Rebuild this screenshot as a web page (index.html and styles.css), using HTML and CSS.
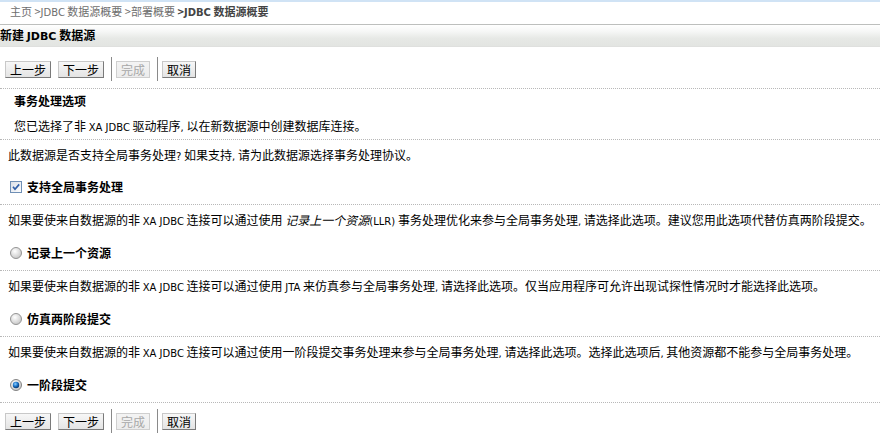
FILE: index.html
```html
<!DOCTYPE html>
<html>
<head>
<meta charset="utf-8">
<link rel="stylesheet" href="styles.css">
</head>
<body>
<div class="topstrip"></div>
<div class="crumbs"><span class="crumb">主页</span> <span class="crumb">&gt;<span class="en">JDBC</span> 数据源概要</span> <span class="crumb">&gt;部署概要</span> <span class="crumb cur">&gt;<span class="en">JDBC</span> 数据源概要</span></div>
<div class="titlebar">新建 <span class="en">JDBC</span> 数据源</div>
<div class="btnrow top">
  <button class="btn">上一步</button>
  <button class="btn">下一步</button>
  <span class="sep"></span>
  <button class="btn disabled">完成</button>
  <span class="sep"></span>
  <button class="btn">取消</button>
</div>
<div class="intro">
  <div class="sectitle">事务处理选项</div>
  <div class="secdesc">您已选择了非 <span class="en">XA JDBC</span> 驱动程序<span class="en">,</span> 以在新数据源中创建数据库连接。</div>
</div>
<div class="question">此数据源是否支持全局事务处理<span class="en">?</span> 如果支持<span class="en">,</span> 请为此数据源选择事务处理协议。</div>
<div class="choice check">
  <svg class="box" width="12" height="12" viewBox="0 0 12 12"><defs><linearGradient id="cbg" x1="0" y1="0" x2="1" y2="1"><stop offset="0" stop-color="#d8dde6"/><stop offset="1" stop-color="#ffffff"/></linearGradient></defs><rect x="0.5" y="0.5" width="11" height="11" fill="url(#cbg)" stroke="#6f8fb5"/><path d="M3 5.8 L5 8.2 L9.2 3.4" fill="none" stroke="#2f5ea8" stroke-width="1.7"/></svg>
  <span class="lbl">支持全局事务处理</span>
</div>
<div class="opt">
  <div class="desc">如果要使来自数据源的非 <span class="en">XA JDBC</span> 连接可以通过使用 <i>记录上一个资源</i><span class="en">(LLR)</span> 事务处理优化来参与全局事务处理<span class="en">,</span> 请选择此选项。建议您用此选项代替仿真两阶段提交。</div>
  <div class="choice">
    <svg class="radio" width="12" height="12" viewBox="0 0 12 12"><defs><radialGradient id="rg" cx="0.4" cy="0.35" r="0.7"><stop offset="0" stop-color="#ffffff"/><stop offset="1" stop-color="#c4c4c4"/></radialGradient></defs><circle cx="6" cy="6" r="5.5" fill="url(#rg)" stroke="#959595"/></svg>
    <span class="lbl">记录上一个资源</span>
  </div>
</div>
<div class="opt">
  <div class="desc">如果要使来自数据源的非 <span class="en">XA JDBC</span> 连接可以通过使用 <span class="en">JTA</span> 来仿真参与全局事务处理<span class="en">,</span> 请选择此选项。仅当应用程序可允许出现试探性情况时才能选择此选项。</div>
  <div class="choice">
    <svg class="radio" width="12" height="12" viewBox="0 0 12 12"><circle cx="6" cy="6" r="5.5" fill="url(#rg)" stroke="#959595"/></svg>
    <span class="lbl">仿真两阶段提交</span>
  </div>
</div>
<div class="opt">
  <div class="desc">如果要使来自数据源的非 <span class="en">XA JDBC</span> 连接可以通过使用一阶段提交事务处理来参与全局事务处理<span class="en">,</span> 请选择此选项。选择此选项后<span class="en">,</span> 其他资源都不能参与全局事务处理。</div>
  <div class="choice">
    <svg class="radio" width="12" height="12" viewBox="0 0 12 12"><defs><radialGradient id="rb" cx="0.4" cy="0.35" r="0.6"><stop offset="0" stop-color="#8fd0ff"/><stop offset="0.6" stop-color="#1a73c8"/><stop offset="1" stop-color="#0b3f7a"/></radialGradient></defs><circle cx="6" cy="6" r="5.5" fill="url(#rg)" stroke="#858585"/><circle cx="6" cy="6" r="3.2" fill="url(#rb)"/></svg>
    <span class="lbl">一阶段提交</span>
  </div>
</div>
<div class="btnrow bottom">
  <button class="btn">上一步</button>
  <button class="btn">下一步</button>
  <span class="sep"></span>
  <button class="btn disabled">完成</button>
  <span class="sep"></span>
  <button class="btn">取消</button>
</div>
</body>
</html>
```
FILE: styles.css
```css
html, body {
  margin: 0;
  padding: 0;
  background: #ffffff;
}
body {
  font-family: "Noto Sans CJK SC", "Liberation Sans", sans-serif;
  font-size: 12px;
  line-height: 14px;
  color: #000;
}
.en {
  font-family: "DejaVu Sans", "Noto Sans CJK SC", sans-serif;
  font-size: 10px;
}
.topstrip {
  height: 2px;
  background: #d0e3f5;
}
.crumbs {
  height: 22px;
  box-sizing: border-box;
  padding: 2px 0 0 10px;
  font-size: 11px;
  line-height: 14px;
  color: #6e6e6e;
  overflow: hidden;
}
.crumbs .en { font-size: 10px; }
.crumb.cur {
  font-weight: bold;
  color: #444;
}
.titlebar {
  height: 23px;
  box-sizing: border-box;
  border-top: 1px solid #bdbfbd;
  border-bottom: 1px solid #dfe0de;
  background: linear-gradient(#ffffff 0%, #f6f7f6 30%, #e6e8e5 65%, #e3e5e2 100%);
  font-weight: bold;
  line-height: 20px;
  overflow: hidden;
}
.titlebar .en { font-size: 11px; font-weight: bold; }
.btnrow {
  height: 42px;
  box-sizing: border-box;
  display: flex;
  align-items: center;
  padding-left: 5px;
  border-bottom: 1px dotted #b8b8b8;
}
.btnrow.top {
  padding-top: 3px;
}
.btnrow.bottom {
  border-bottom: none;
  height: 36px;
}
.btn {
  font-family: "Noto Sans CJK SC", sans-serif;
  font-size: 12px;
  line-height: 13px;
  height: 17px;
  padding: 0 4px;
  margin: 0 7px 0 0;
  border: 1px solid #7a7a7a;
  border-top-color: #c8c8c8;
  border-left-color: #c8c8c8;
  background: linear-gradient(#f7f7f7, #e4e4e4);
  color: #000;
  border-radius: 0;
}
.btn.disabled {
  color: #a8a8a8;
  border-color: #cfcfcf;
  background: linear-gradient(#f4f4f4, #ececec);
}
.sep {
  width: 1px;
  height: 24px;
  background: #8a8a8a;
  margin: 0 4px 0 0;
}
.intro {
  height: 51px;
  box-sizing: border-box;
  border-bottom: 1px dotted #b8b8b8;
}
.sectitle {
  height: 24px;
  line-height: 24px;
  font-weight: bold;
  padding-left: 14px;
  overflow: hidden;
}
.secdesc {
  height: 26px;
  line-height: 26px;
  padding-left: 14px;
  overflow: hidden;
}
.question {
  height: 30px;
  line-height: 30px;
  padding-left: 8px;
  overflow: hidden;
}
.choice {
  height: 36px;
  display: flex;
  align-items: center;
  padding-left: 10px;
  box-sizing: border-box;
  border-bottom: 1px dotted #b8b8b8;
}
.choice.check { height: 35px; }
.choice svg { flex: none; display: block; margin-right: 5px; }
.lbl {
  font-weight: bold;
}
.desc {
  height: 30px;
  line-height: 30px;
  padding-left: 8px;
  white-space: nowrap;
  overflow: hidden;
}
.desc i {
  font-style: italic;
}
```
